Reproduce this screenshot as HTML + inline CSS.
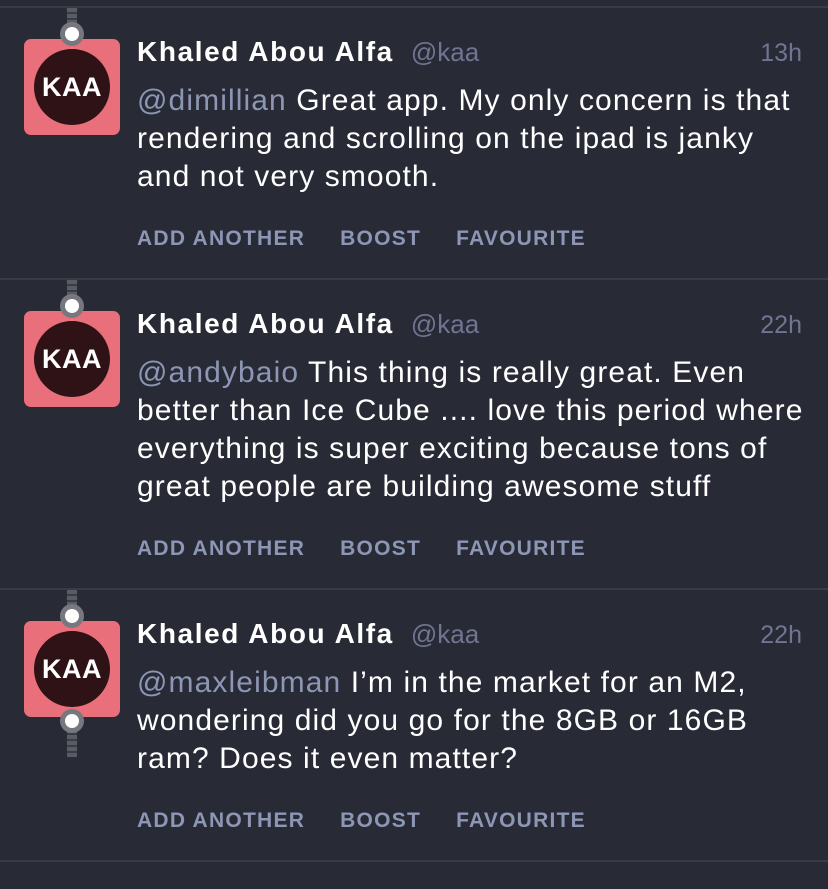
<!DOCTYPE html>
<html><head><meta charset="utf-8"><style>
*{margin:0;padding:0;box-sizing:border-box}
body{width:828px;height:878px;background:#282a35;font-family:"Liberation Sans",sans-serif;position:relative;overflow:hidden}
.sep{position:absolute;left:0;width:828px;height:2px;background:#393b46}
.post{position:absolute;left:0;width:828px;height:300px}
.av{position:absolute;left:24px;top:32px;width:96px;height:96px;background:#e9707a;border-radius:7px}
.av .c{position:absolute;left:10px;top:10px;width:76px;height:76px;border-radius:50%;background:#2f1216;color:#fff;font-weight:bold;font-size:27px;letter-spacing:0.5px;text-align:center;line-height:76px}
.dot{position:absolute;left:60px;width:24px;height:24px;border-radius:50%;background:#77787e}
.dot:after{content:"";position:absolute;left:5px;top:5px;width:14px;height:14px;border-radius:50%;background:#fff}
.dash{position:absolute;left:67px;width:10px;background:repeating-linear-gradient(#5a5c64 0 4px,#3a3c45 4px 6px)}
.name{position:absolute;left:137px;top:29px;color:#fff;font-weight:bold;font-size:28px;letter-spacing:1.6px;white-space:nowrap}
.name span{font-weight:normal;color:#6f7592;font-size:26px;letter-spacing:0;margin-left:17px}
.time{position:absolute;right:26px;top:32px;color:#6f7592;font-size:25px}
.body{position:absolute;left:137px;top:75px;width:690px;color:#fff;font-size:30px;letter-spacing:1.1px;line-height:38px;white-space:nowrap}
.body b{font-weight:normal;color:#8d97b5}
.act{position:absolute;left:137px;color:#8d97b5;font-weight:bold;font-size:21px;letter-spacing:1.25px;white-space:nowrap}
.act span{margin-right:35px}
</style></head><body>
<div class="sep" style="top:6px"></div>
<div class="sep" style="top:278px"></div>
<div class="sep" style="top:588px"></div>
<div class="sep" style="top:860px"></div>

<div class="post" style="top:7px">
<div class="dash" style="top:1px;height:18px"></div>
<div class="av"><div class="c">KAA</div></div>
<div class="dot" style="top:15px"></div>
<div class="name">Khaled Abou Alfa<span>@kaa</span></div>
<div class="time">13h</div>
<div class="body"><b>@dimillian</b> Great app. My only concern is that<br>rendering and scrolling on the ipad is janky<br>and not very smooth.</div>
<div class="act" style="top:220px"><span>ADD ANOTHER</span><span>BOOST</span><span>FAVOURITE</span></div>
</div>

<div class="post" style="top:279px">
<div class="dash" style="top:1px;height:18px"></div>
<div class="av"><div class="c">KAA</div></div>
<div class="dot" style="top:15px"></div>
<div class="name">Khaled Abou Alfa<span>@kaa</span></div>
<div class="time">22h</div>
<div class="body"><b>@andybaio</b> This thing is really great. Even<br>better than Ice Cube .... love this period where<br>everything is super exciting because tons of<br>great people are building awesome stuff</div>
<div class="act" style="top:258px"><span>ADD ANOTHER</span><span>BOOST</span><span>FAVOURITE</span></div>
</div>

<div class="post" style="top:589px">
<div class="dash" style="top:1px;height:18px"></div>
<div class="dash" style="top:140px;height:28px"></div>
<div class="av"><div class="c">KAA</div></div>
<div class="dot" style="top:15px"></div>
<div class="dot" style="top:120px"></div>
<div class="name">Khaled Abou Alfa<span>@kaa</span></div>
<div class="time">22h</div>
<div class="body"><b>@maxleibman</b> I’m in the market for an M2,<br>wondering did you go for the 8GB or 16GB<br>ram? Does it even matter?</div>
<div class="act" style="top:220px"><span>ADD ANOTHER</span><span>BOOST</span><span>FAVOURITE</span></div>
</div>
</body></html>
